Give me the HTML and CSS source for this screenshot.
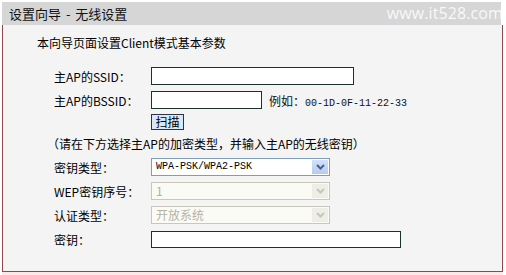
FILE: index.html
```html
<!DOCTYPE html>
<html lang="zh-CN">
<head>
<meta charset="utf-8">
<title>设置向导 - 无线设置</title>
<link rel="stylesheet" href="styles.css">
</head>
<body>
<div class="page">
  <div class="header">
    <span class="title">设置向导 - 无线设置</span>
    <span class="mark">www.it528.com</span>
  </div>
  <div class="panel">
    <p class="intro">本向导页面设置Client模式基本参数</p>
    <div class="form">
      <div class="row">
        <span class="label">主AP的SSID：</span>
        <span class="input w-ssid"></span>
      </div>
      <div class="row">
        <span class="label">主AP的BSSID：</span>
        <span class="input w-bssid"></span>
        <span class="hint">例如：<span class="mono">00-1D-0F-11-22-33</span></span>
      </div>
      <div class="row row-btn">
        <span class="label"></span>
        <span class="btn">扫描</span>
      </div>
      <div class="row row-note">
        <span class="note">（请在下方选择主AP的加密类型，并输入主AP的无线密钥）</span>
      </div>
      <div class="row">
        <span class="label">密钥类型：</span>
        <span class="select">
          <span class="select-text">WPA-PSK/WPA2-PSK</span>
          <span class="arrow"><svg width="9" height="6" viewBox="0 0 9 6"><path d="M1 1 L4.5 4.5 L8 1" fill="none" stroke="#4d6185" stroke-width="2"/></svg></span>
        </span>
      </div>
      <div class="row">
        <span class="label">WEP密钥序号：</span>
        <span class="select disabled">
          <span class="select-text">1</span>
          <span class="arrow"><svg width="9" height="6" viewBox="0 0 9 6"><path d="M1 1 L4.5 4.5 L8 1" fill="none" stroke="#c9c7ba" stroke-width="2"/></svg></span>
        </span>
      </div>
      <div class="row">
        <span class="label">认证类型：</span>
        <span class="select disabled">
          <span class="select-text">开放系统</span>
          <span class="arrow"><svg width="9" height="6" viewBox="0 0 9 6"><path d="M1 1 L4.5 4.5 L8 1" fill="none" stroke="#c9c7ba" stroke-width="2"/></svg></span>
        </span>
      </div>
      <div class="row">
        <span class="label">密钥：</span>
        <span class="input w-key"></span>
      </div>
    </div>
  </div>
  <div class="below"></div>
</div>
</body>
</html>
```

FILE: styles.css
```css
html, body {
  margin: 0;
  padding: 0;
  background: #ffffff;
}
body {
  font-family: "Noto Sans CJK SC", "Liberation Sans", sans-serif;
  font-size: 12px;
  color: #000;
}
.page {
  width: 501px;
  margin-left: 2px;
  padding-top: 2px;
}
.header {
  height: 23px;
  width: 499px;
  background: #d6d6d6;
  display: flex;
  align-items: center;
  justify-content: space-between;
  box-sizing: border-box;
  padding-left: 7px;
  overflow: visible;
}
.title {
  font-size: 13px;
  word-spacing: 2px;
  line-height: 23px;
  color: #111;
}
.mark {
  font-family: "Open Sans", "Liberation Sans", sans-serif;
  font-size: 16px;
  letter-spacing: 0.1px;
  color: rgba(255,255,255,0.85);
  line-height: 23px;
  margin-right: -2px;
}
.panel {
  height: 247px;
  box-sizing: border-box;
  background: #f4f4f4;
  border-left: 1px solid #8e4a4a;
  border-right: 1px solid #8e4a4a;
  border-bottom: 1px solid #8e4a4a;
}
.below {
  height: 4px;
  background: #fbe9ea;
}
.intro {
  margin: 0;
  padding: 9px 0 0 34px;
  height: 30px;
  line-height: 18px;
  box-sizing: content-box;
}
.form {
  padding-left: 51px;
  display: flex;
  flex-direction: column;
}
.row {
  display: flex;
  align-items: center;
  height: 24px;
}
.row-btn {
  height: 20px;
}
.row-note {
  height: 23px;
}
.label {
  width: 97px;
  flex: none;
  white-space: nowrap;
}
.input {
  display: block;
  height: 18px;
  box-sizing: border-box;
  background: #ffffff;
  border: 1px solid #1c3030;
}
.w-ssid { width: 203px; }
.w-bssid { width: 111px; }
.w-key { width: 250px; height: 17px; border-color: #1c3030; }
.hint {
  margin-left: 7px;
  color: #111;
}
.mono {
  font-family: "Liberation Mono", monospace;
  font-size: 10px;
}
.btn {
  display: block;
  width: 33px;
  height: 16px;
  box-sizing: border-box;
  border: 1px solid #2b3440;
  background: #d9e8f6;
  text-align: center;
  line-height: 14px;
  font-size: 12px;
}
.note {
  margin-left: -7px;
  white-space: nowrap;
}
.select {
  display: flex;
  width: 179px;
  height: 18px;
  box-sizing: border-box;
  border: 1px solid #7f9db9;
  background: #ffffff;
  align-items: stretch;
}
.select-text {
  flex: 1;
  padding-left: 4px;
  line-height: 16px;
  font-family: "Liberation Mono", "Noto Sans CJK SC", monospace;
  font-size: 10px;
}
.disabled .select-text {
  font-family: "Noto Sans CJK SC", sans-serif;
  font-size: 12px;
  color: #b5b2a5;
}
.arrow {
  width: 16px;
  margin: 1px;
  background: linear-gradient(#d3e0fa, #b6caf2);
  display: flex;
  align-items: center;
  justify-content: center;
}
.disabled {
  border-color: #c9c7ba;
  background: #fbfbf6;
}
.disabled .arrow {
  background: #eeede6;
}
```
